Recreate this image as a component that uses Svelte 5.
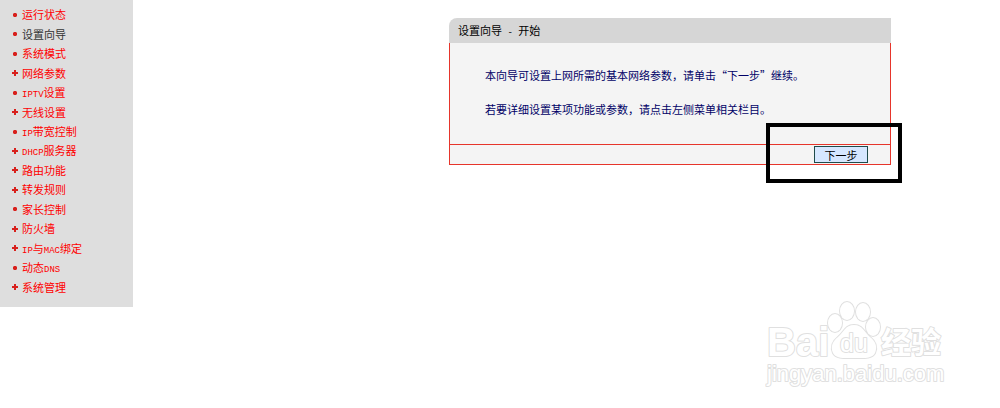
<script lang="ts">
  type Item = { label: string; sub?: boolean };

  // sub marks entries that open a submenu, they get a cross instead of a dot
  const items: Item[] = [
    { label: '运行状态' },
    { label: '设置向导' },
    { label: '系统模式' },
    { label: '网络参数', sub: true },
    { label: 'IPTV设置' },
    { label: '无线设置', sub: true },
    { label: 'IP带宽控制' },
    { label: 'DHCP服务器', sub: true },
    { label: '路由功能', sub: true },
    { label: '转发规则', sub: true },
    { label: '家长控制' },
    { label: '防火墙', sub: true },
    { label: 'IP与MAC绑定', sub: true },
    { label: '动态DNS' },
    { label: '系统管理', sub: true },
  ];

  let current = $state('设置向导');

  // Latin runs are set smaller than the Chinese around them
  const runs = (label: string) => label.match(/[A-Z]+|[^A-Z]+/g) ?? [];

  function select(e: MouseEvent, label: string) {
    e.preventDefault();
    current = label;
  }
</script>

<div class="page">
  <nav class="menu">
    <ul>
      {#each items as item}
        <li>
          <svg class="mark" viewBox="0 0 6 6" aria-hidden="true">
            {#if item.sub}
              <path d="M2 0h2v2h2v2H4v2H2V4H0V2h2z" />
            {:else}
              <path d="M2 1h2l1 1v2l-1 1H2L1 4V2z" />
            {/if}
          </svg>
          <a href="#menu" class:current={item.label === current} onclick={(e) => select(e, item.label)}>{#each runs(item.label) as run}<span class:latin={/[A-Z]/.test(run)}>{run}</span>{/each}</a>
        </li>
      {/each}
    </ul>
  </nav>

  <main>
    <section class="panel">
      <h1>设置向导<span class="latin">&nbsp;-&nbsp;</span>开始</h1>
      <div class="body">
        <p>本向导可设置上网所需的基本网络参数，请单击“下一步”继续。</p>
        <p>若要详细设置某项功能或参数，请点击左侧菜单相关栏目。</p>
      </div>
      <div class="foot">
        <div class="next">
          <button type="button">下一步</button>
          <span class="highlight"></span>
        </div>
      </div>
    </section>

    <svg class="watermark" viewBox="0 0 184 96" role="img" aria-label="Baidu经验 jingyan.baidu.com">
      <g class="outline">
        <text x="2" y="62" class="brand">Bai</text>
        <ellipse cx="70" cy="29" rx="7" ry="9" />
        <ellipse cx="82" cy="17" rx="7" ry="9" />
        <ellipse cx="98" cy="18" rx="7" ry="9" />
        <ellipse cx="108" cy="33" rx="7" ry="9" />
        <path d="M89 31C80 31 79 38 73 43C68 47 65 52 68 59C71 65 80 64 89 64C98 64 107 65 110 59C113 52 110 47 105 43C99 38 98 31 89 31Z" />
        <text x="75" y="58" class="du">du</text>
        <text x="116" y="59" class="cn">经验</text>
        <text x="2" y="87" class="site">jingyan.baidu.com</text>
      </g>
    </svg>
  </main>
</div>

<style>
  :global(body) { background: #fff; }
  .page {
    display: flex;
    align-items: flex-start;
    font-family: "Noto Sans CJK SC", sans-serif;
    font-size: 11px;
    line-height: 17px;
  }

  /* Menu */
  .menu {
    width: 133px;
    flex-shrink: 0;
    background: #dedede;
  }
  ul {
    display: grid;
    grid-auto-rows: 1fr;
    box-sizing: border-box;
    min-height: 307px;
    margin: 0;
    padding: 5px 0 10px 12px;
    list-style: none;
  }
  li { display: flex; align-items: center; gap: 4px; }
  .mark { width: 6px; height: 6px; fill: #d8201c; }
  a { color: #f00; text-decoration: none; white-space: nowrap; }
  a.current { color: #333; }
  .latin {
    font-family: "Liberation Mono", monospace;
    font-size: 9px;
    line-height: 1;
  }

  /* Wizard panel */
  main {
    flex: 1;
    min-width: 0;
    padding: 18px 109px 0 316px;
  }
  h1 {
    margin: 0;
    padding: 4px 9px;
    border-top-left-radius: 8px;
    background: #d6d6d6;
    color: #000;
    font-size: 11px;
    font-weight: 400;
    line-height: 17px;
  }
  .body {
    padding: 24px 35px 26px;
    border: 1px solid #e6352b;
    border-top: 0;
    background: #f4f4f4;
    color: #000066;
  }
  p { margin: 0; }
  p + p { margin-top: 17px; }
  .foot {
    display: flex;
    justify-content: flex-end;
    padding: 1px 22px;
    border: 1px solid #e6352b;
    border-top: 0;
    background: #f4f4f4;
  }
  .next { position: relative; display: flex; }
  button {
    width: 54px;
    height: 17px;
    padding: 0;
    border: 1px solid #1f4a4a;
    background: #d6e7ff;
    color: #000;
    font: inherit;
    line-height: 14px;
    cursor: pointer;
  }
  .highlight {
    position: absolute;
    inset: -23px -34px -20px -48px;
    border: 4px solid #000;
    pointer-events: none;
  }

  /* Watermark */
  .watermark {
    display: block;
    width: 184px;
    height: 96px;
    margin: 129px -58px 0 auto;
  }
  .outline {
    fill: #fff;
    stroke: #e0e0e0;
    stroke-width: 2;
    stroke-linejoin: round;
    paint-order: stroke;
    font-family: "Liberation Sans", "Noto Sans CJK SC", sans-serif;
  }
  .brand { font-size: 40px; font-weight: 700; }
  .du { font-size: 25px; }
  .cn { font-size: 30px; font-weight: 700; }
  .site { font-size: 22px; }
</style>
